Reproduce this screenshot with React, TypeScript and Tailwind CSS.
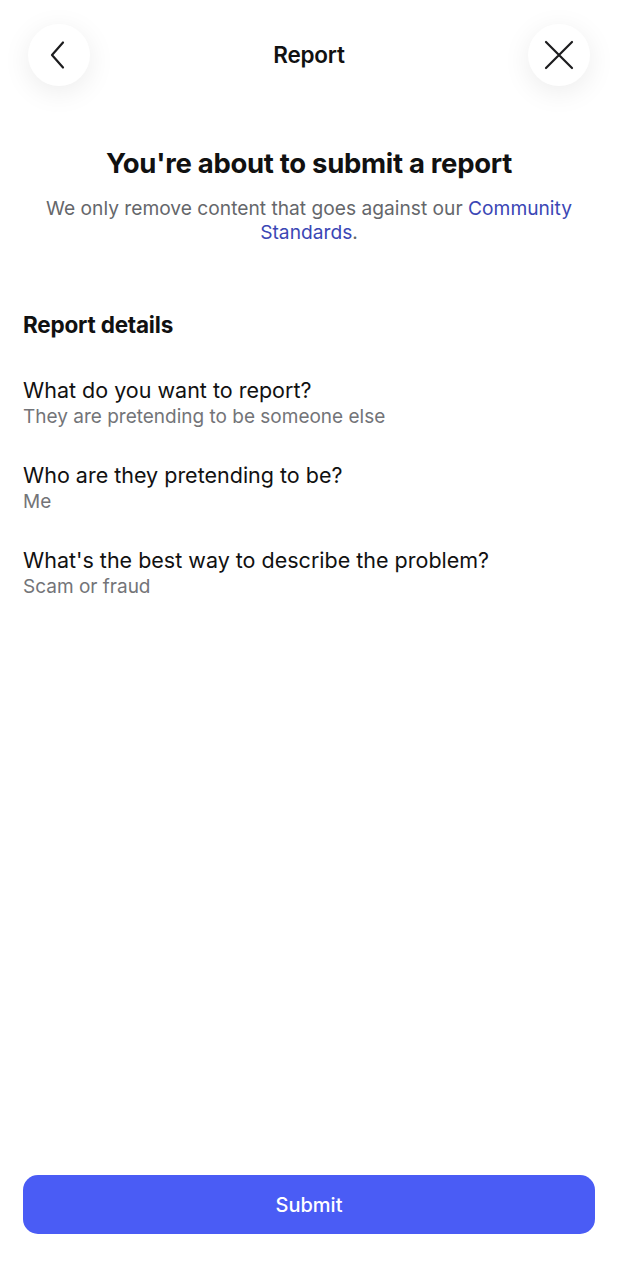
const details = [
  { q: 'What do you want to report?', a: 'They are pretending to be someone else' },
  { q: 'Who are they pretending to be?', a: 'Me' },
  { q: "What's the best way to describe the problem?", a: 'Scam or fraud' },
]

function RoundButton({ children }: { children: React.ReactNode }) {
  return (
    <button className="w-[62px] h-[62px] rounded-full bg-white shadow-[0_6px_28px_rgba(0,0,0,0.08)] flex items-center justify-center text-[#1c1c1e]">
      {children}
    </button>
  )
}

export default function App() {
  return (
    <div className="w-[618px] h-[1280px] bg-white flex flex-col font-['Inter',sans-serif] text-[#111]">
      {/* Header */}
      <div className="flex items-center justify-between px-[28px] pt-[24px]">
        <RoundButton>
          <svg width="20" height="30" viewBox="0 0 20 30" fill="none" stroke="currentColor" strokeWidth="2.2" strokeLinecap="round" strokeLinejoin="round" className="-ml-[2px]">
            <path d="M15 2.5 L4 15 L15 27.5" />
          </svg>
        </RoundButton>
        <span className="text-[22.5px] font-semibold tracking-[-0.2px]">Report</span>
        <RoundButton>
          <svg width="32" height="32" viewBox="0 0 32 32" fill="none" stroke="currentColor" strokeWidth="2.2" strokeLinecap="round">
            <path d="M3 3 L29 29 M29 3 L3 29" />
          </svg>
        </RoundButton>
      </div>

      {/* Intro */}
      <div className="flex flex-col items-center text-center px-[36px] mt-[60px]">
        <h1 className="text-[27.5px] font-bold leading-[34px] tracking-[-0.3px]">You're about to submit a report</h1>
        <p className="mt-[16px] text-[19.2px] leading-[24px] text-[#65676b]">
          We only remove content that goes against our <span className="text-[#3b47b5]">Community Standards</span>.
        </p>
      </div>

      {/* Details */}
      <div className="px-[23px] mt-[66px]">
        <h2 className="text-[22.5px] font-bold leading-[30px] tracking-[-0.2px]">Report details</h2>
        <div className="mt-[37px] flex flex-col gap-[33px]">
          {details.map((d) => (
            <div key={d.q} className="flex flex-col">
              <span className="text-[21.5px] leading-[26px]">{d.q}</span>
              <span className="mt-[2px] text-[19px] leading-[24px] text-[#737478]">{d.a}</span>
            </div>
          ))}
        </div>
      </div>

      <div className="flex-1" />

      {/* Submit */}
      <div className="px-[23px] pb-[46px]">
        <button className="w-full h-[59px] rounded-[15px] bg-[#4a5cf5] text-white text-[20px] font-medium">
          Submit
        </button>
      </div>
    </div>
  )
}
